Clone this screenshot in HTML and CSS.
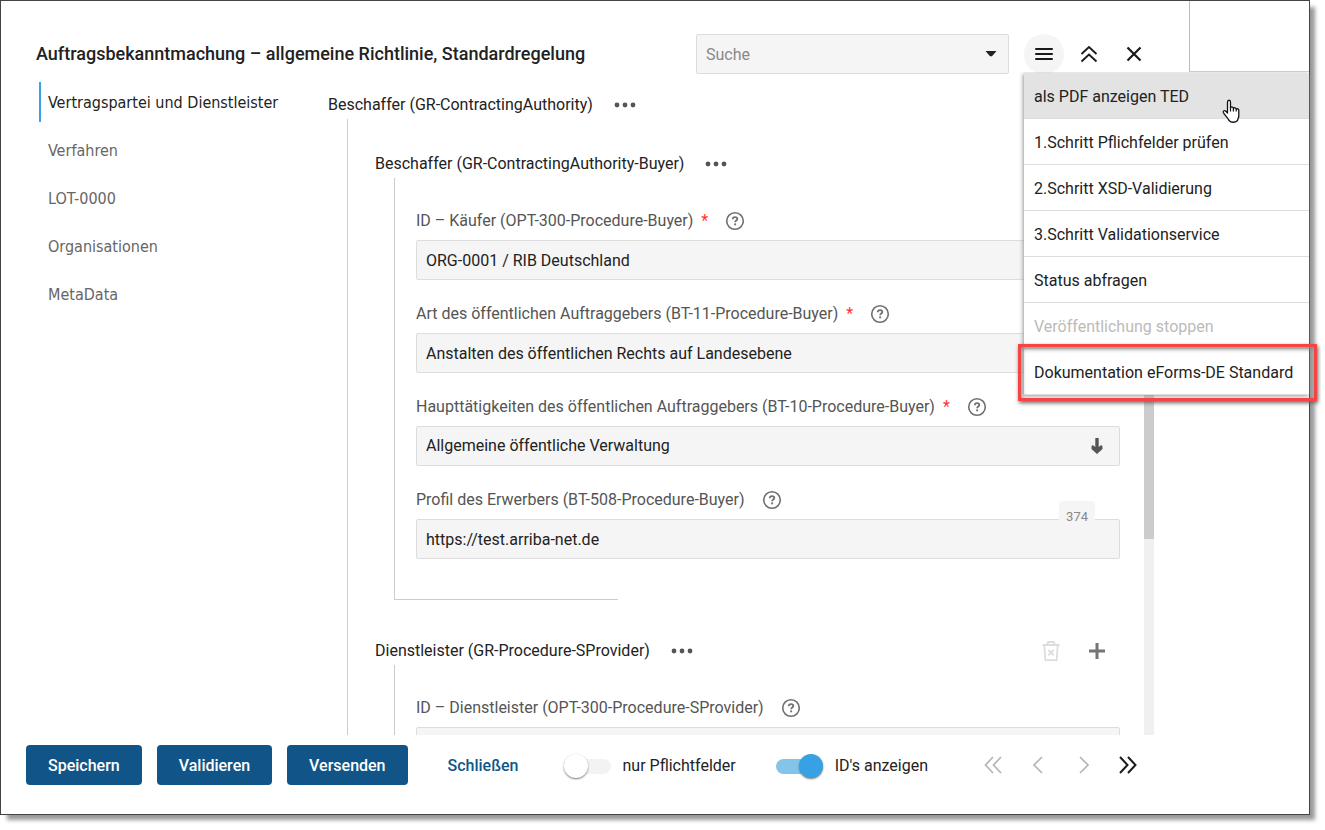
FILE: index.html
```html
<!DOCTYPE html>
<html lang="de">
<head>
<meta charset="utf-8">
<title>Auftragsbekanntmachung</title>
<link rel="stylesheet" href="styles.css">
</head>
<body>
<svg class="defs" aria-hidden="true">
  <symbol id="help" viewBox="0 0 20 20"><circle cx="10" cy="10" r="8.3" fill="none" stroke="currentColor" stroke-width="1.6"/><path d="M7.700 8.200c.1-1.400 1-2.100 2.300-2.100s2.300.8 2.300 1.900c0 1.500-2.200 1.600-2.200 3.300" fill="none" stroke="currentColor" stroke-width="1.800"/><rect x="9.200" y="12.400" width="1.900" height="1.900" fill="currentColor"/></symbol>
  <symbol id="dots" viewBox="0 0 22 6"><circle cx="3" cy="3" r="2.400"/><circle cx="11" cy="3" r="2.400"/><circle cx="19" cy="3" r="2.400"/></symbol>
</svg>
<div class="window">
  <main class="dialog">
    <header class="header">
      <h1 class="title">Auftragsbekanntmachung – allgemeine Richtlinie, Standardregelung</h1>
      <div class="select search">
        <select class="field placeholder" aria-label="Suche"><option>Suche</option></select>
        <svg class="caret" width="12" height="6" viewBox="0 0 12 6"><path d="M0.5 0h11L7 5.2H5z" fill="#222"/></svg>
      </div>
      <div class="tools">
        <button class="icon-button active" aria-label="Menü" aria-expanded="true"><svg width="18" height="14" viewBox="0 0 18 14"><path d="M1 2h16M1 7h16M1 12h16" stroke="#1a1a1a" stroke-width="2" stroke-linecap="round"/></svg></button>
        <button class="icon-button" aria-label="Zuklappen"><svg width="18" height="18" viewBox="0 0 18 18"><path d="M1.500 9L9 2l7.500 7M1.500 16.500L9 9.500l7.500 7" fill="none" stroke="#1a1a1a" stroke-width="1.800"/></svg></button>
        <button class="icon-button" aria-label="Schließen"><svg width="16" height="16" viewBox="0 0 16 16"><path d="M1.500 1.500l13 13M14.500 1.500l-13 13" stroke="#1a1a1a" stroke-width="2.200"/></svg></button>
      </div>
    </header>
    <div class="content">
      <nav class="sections">
        <a class="section current" href="#a">Vertragspartei und Dienstleister</a>
        <a class="section" href="#b">Verfahren</a>
        <a class="section" href="#c">LOT-0000</a>
        <a class="section" href="#d">Organisationen</a>
        <a class="section" href="#e">MetaData</a>
      </nav>
      <form class="form">
        <div class="group-head"><h2 class="group-title">Beschaffer (GR-ContractingAuthority)</h2><button type="button" class="more" aria-label="Mehr"><svg width="22" height="6"><use href="#dots"/></svg></button></div>
        <div class="group-body outer">
          <div class="group-head"><h3 class="group-title">Beschaffer (GR-ContractingAuthority-Buyer)</h3><button type="button" class="more" aria-label="Mehr"><svg width="22" height="6"><use href="#dots"/></svg></button></div>
          <div class="group-body inner">
            <div class="row">
              <div class="label-line"><label for="f1">ID – Käufer (OPT-300-Procedure-Buyer) <span class="required">*</span></label><svg class="help" width="20" height="20"><use href="#help"/></svg></div>
              <input class="field" id="f1" value="ORG-0001 / RIB Deutschland">
            </div>
            <div class="row">
              <div class="label-line"><label for="f2">Art des öffentlichen Auftraggebers (BT-11-Procedure-Buyer) <span class="required">*</span></label><svg class="help" width="20" height="20"><use href="#help"/></svg></div>
              <input class="field" id="f2" value="Anstalten des öffentlichen Rechts auf Landesebene">
            </div>
            <div class="row">
              <div class="label-line"><label for="f3">Haupttätigkeiten des öffentlichen Auftraggebers (BT-10-Procedure-Buyer) <span class="required">*</span></label><svg class="help" width="20" height="20"><use href="#help"/></svg></div>
              <div class="select">
                <select class="field" id="f3"><option>Allgemeine öffentliche Verwaltung</option></select>
                <svg class="caret" width="12" height="16" viewBox="0 0 12 16"><path d="M4.300 0h3.400v9L10.300 7 11.500 8.500v2.500L6 16 .5 11V8.500L1.700 7l2.600 2z" fill="#555"/></svg>
              </div>
            </div>
            <div class="row">
              <div class="label-line"><label for="f4">Profil des Erwerbers (BT-508-Procedure-Buyer)</label><svg class="help" width="20" height="20"><use href="#help"/></svg></div>
              <div class="counted">
                <input class="field" id="f4" value="https://test.arriba-net.de">
                <span class="counter">374</span>
              </div>
            </div>
          </div>
          <div class="group-end"></div>
          <div class="group-head">
            <h3 class="group-title">Dienstleister (GR-Procedure-SProvider)</h3><button type="button" class="more" aria-label="Mehr"><svg width="22" height="6"><use href="#dots"/></svg></button>
            <div class="group-actions">
              <button type="button" class="plain" aria-label="Löschen" disabled><svg width="18" height="22" viewBox="0 0 18 22"><path d="M.5 5h17M5.500 4.500V3.200L6.500 2h5l1 1.200v1.300M2.300 5l1 15.200h11.400l1-15.200M6.300 10l5.400 5.400M11.700 10l-5.400 5.400" fill="none" stroke="#ddd" stroke-width="1.800"/></svg></button>
              <button type="button" class="plain" aria-label="Hinzufügen"><svg width="18" height="18" viewBox="0 0 18 18"><path d="M9 1v16M1 9h16" stroke="#757575" stroke-width="3"/></svg></button>
            </div>
          </div>
          <div class="group-body inner">
            <div class="row">
              <div class="label-line"><label for="f5">ID – Dienstleister (OPT-300-Procedure-SProvider)</label><svg class="help" width="20" height="20"><use href="#help"/></svg></div>
              <input class="field" id="f5">
            </div>
          </div>
        </div>
      </form>
      <div class="scrollbar"><div class="thumb"></div></div>
    </div>
    <footer class="footer">
      <button class="primary">Speichern</button>
      <button class="primary">Validieren</button>
      <button class="primary">Versenden</button>
      <button class="link">Schließen</button>
      <label class="toggle"><input type="checkbox" class="switch">nur Pflichtfelder</label>
      <label class="toggle"><input type="checkbox" class="switch" checked>ID's anzeigen</label>
      <div class="pager">
        <button class="plain" aria-label="Erste" disabled><svg width="20" height="18" viewBox="0 0 20 18"><path d="M10 1L2.500 9l7.500 8M18 1l-7.500 8 7.500 8" fill="none" stroke="#b5b5b5" stroke-width="1.700"/></svg></button>
        <button class="plain" aria-label="Zurück" disabled><svg width="20" height="18" viewBox="0 0 20 18"><path d="M14 1L6 9l8 8" fill="none" stroke="#b5b5b5" stroke-width="1.700"/></svg></button>
        <button class="plain" aria-label="Weiter" disabled><svg width="20" height="18" viewBox="0 0 20 18"><path d="M7 1l8 8-8 8" fill="none" stroke="#b5b5b5" stroke-width="1.700"/></svg></button>
        <button class="plain" aria-label="Letzte"><svg width="20" height="18" viewBox="0 0 20 18"><path d="M2 1l7.500 8L2 17M10 1l7.500 8-7.500 8" fill="none" stroke="#1a1a1a" stroke-width="2"/></svg></button>
      </div>
    </footer>
  </main>
  <aside class="backdrop"><div class="backdrop-head"></div></aside>
  <div class="menu">
    <button class="menu-item hover">als PDF anzeigen TED</button>
    <button class="menu-item">1.Schritt Pflichfelder prüfen</button>
    <button class="menu-item">2.Schritt XSD-Validierung</button>
    <button class="menu-item">3.Schritt Validationservice</button>
    <button class="menu-item">Status abfragen</button>
    <button class="menu-item" disabled>Veröffentlichung stoppen</button>
    <button class="menu-item">Dokumentation eForms-DE Standard</button>
    <div class="marker"></div>
    <svg class="pointer" width="18" height="25" viewBox="0 0 18 25"><path d="M5.500 14V3.200C5.500.6 8.500.6 8.500 3.200V9c.3-1.600 2.700-1.500 3 .6.500-1.400 2.600-1.100 2.800.8.700-1.100 2.500-.7 2.500 1.100V17c0 2-1.300 3.200-1.300 4.500-2 2.300-6.500 2.300-8.500 0C6.500 19.500 3 16.800 1.300 13.500.8 11.800 2.700 11 3.900 12.300z" fill="#fff" stroke="#111" stroke-width="1.300" stroke-linejoin="round"/><path d="M8.500 8v4.500M11.400 9.500v3M14.200 10.500v2" stroke="#111" stroke-width="1.200"/></svg>
  </div>
</div>
</body>
</html>
```
FILE: styles.css
```css
* { box-sizing: border-box; }
body {
  margin: 0;
  height: 100vh;
  padding: 0 15px 15px 0;
  overflow: hidden;
  background: #fff;
  color: #222;
  font: 16px/24px Roboto, sans-serif;
}
button, input, select { font: inherit; color: inherit; margin: 0; }
button { border: 0; padding: 0; background: none; }
svg { display: block; flex: none; }
h1, h2, h3 { margin: 0; font-size: 16px; font-weight: 400; }
.defs { position: absolute; width: 0; height: 0; }

.window {
  position: relative;
  display: flex;
  height: 100%;
  border: 1px solid #444;
  box-shadow: 6px 6px 4px -1px #999;
}
.dialog { flex: 1; min-width: 0; display: flex; flex-direction: column; padding: 33px 35px 29px 25px; }
.backdrop { width: 120px; }
.backdrop-head { height: 71px; border-left: 1px solid #bbb; border-bottom: 1px solid #ccc; }

.header { display: flex; align-items: center; padding-left: 10px; }
.title { flex: 1; font-size: 18px; font-weight: 500; white-space: nowrap; }
.search { width: 313px; }
.tools { display: flex; gap: 5px; margin: 0 0 0 15px; }
.icon-button { width: 40px; height: 40px; border-radius: 50%; display: grid; place-items: center; }
.icon-button.active { background: #f5f5f5; }

.field {
  width: 100%;
  height: 40px;
  padding: 0 9px;
  border: 1px solid #ddd;
  border-radius: 2px;
  background: #f5f5f5;
  appearance: none;
}
.placeholder { padding-top: 2px; color: #888; }
.select { display: grid; align-items: center; }
.select > * { grid-area: 1 / 1; }
.caret { justify-self: end; margin-right: 12px; pointer-events: none; }
.row .caret { margin-right: 17px; }

.content { flex: 1; min-height: 0; display: flex; padding-top: 8px; }
.sections { width: 302px; padding-left: 13px; display: flex; flex-direction: column; gap: 8px; }
.section {
  height: 40px;
  line-height: 42px;
  padding-left: 7px;
  border-left: 2px solid transparent;
  color: #666;
  font-family: "DejaVu Sans Condensed", "DejaVu Sans", sans-serif;
  font-stretch: condensed;
  font-size: 16px;
  text-decoration: none;
  white-space: nowrap;
}
.section.current { color: #222; border-color: #36a2e5; }

.form { flex: 1; min-width: 0; overflow: hidden; padding: 11px 24px 0 0; }
.group-head { display: flex; align-items: center; height: 24px; }
.group-title { white-space: nowrap; }
.more { margin-left: 21px; fill: #555; }
.group-actions { display: flex; align-items: center; gap: 28px; margin-left: auto; padding-right: 14px; }
.group-body { margin: 2px 0 0 19px; border-left: 1px solid #ccc; }
.outer { padding: 33px 0 40px 27px; }
.inner { padding: 31px 0 40px 21px; display: grid; gap: 22px; }
.row { display: grid; gap: 7px; }
.label-line { display: flex; align-items: center; gap: 17px; color: #555; white-space: nowrap; }
.required { margin-left: 4px; color: #f33; }
.help { color: #707070; }
.group-end { width: 30%; height: 1px; margin: 0 0 39px 19px; background: #ccc; }
.counted { position: relative; }
.counter {
  position: absolute;
  top: -18px;
  right: 25px;
  height: 24px;
  padding: 4px 7px 0;
  border-radius: 4px 4px 0 0;
  background: #f5f5f5;
  color: #888;
  font-size: 13px;
}
.scrollbar { width: 10px; background: #f0f0f0; }
.thumb { height: 70%; background: #ccc; }

.footer { display: flex; align-items: center; padding-top: 10px; white-space: nowrap; }
.primary { height: 40px; padding: 2px 22px 0; margin-right: 15px; border-radius: 4px; background: #115588; color: #fff; font-weight: 500; }
.link { margin: 0 45px 0 25px; padding-top: 2px; color: #115588; font-weight: 500; }
.toggle { display: flex; align-items: center; gap: 12px; padding-top: 2px; margin-right: 40px; }
.switch {
  position: relative;
  appearance: none;
  width: 47px;
  height: 15px;
  border-radius: 8px;
  background: #f3f3f3;
}
.switch::before {
  content: "";
  position: absolute;
  top: -5px;
  left: 0;
  width: 24px;
  height: 24px;
  border-radius: 50%;
  background: #fff;
  box-shadow: 0 1px 2px #777;
}
.switch:checked { background: #83c4ea; }
.switch:checked::before { left: auto; right: 0; background: #36a2e5; }
.pager { display: flex; margin-left: auto; padding-right: 16px; gap: 25px; }

.menu {
  position: absolute;
  top: 72px;
  right: 0;
  width: 285px;
  background: #fff;
  box-shadow: -1px 1px 4px #999;
  clip-path: inset(-1px -12px -14px -12px);
}
.menu-item {
  display: block;
  width: 100%;
  height: 46px;
  padding: 2px 10px 0;
  border-bottom: 1px solid #ddd;
  text-align: left;
  white-space: nowrap;
}
.menu-item.hover { background: #e3e3e3; }
.menu-item:disabled { color: #bbb; }
.marker {
  position: absolute;
  left: -6px;
  right: -8px;
  bottom: -6px;
  height: 57px;
  border: 3px solid #f44444;
  box-shadow: 1px 2px 4px #666, inset 1px 2px 4px #888;
}
.pointer { position: absolute; left: 198px; top: 26px; }
```
